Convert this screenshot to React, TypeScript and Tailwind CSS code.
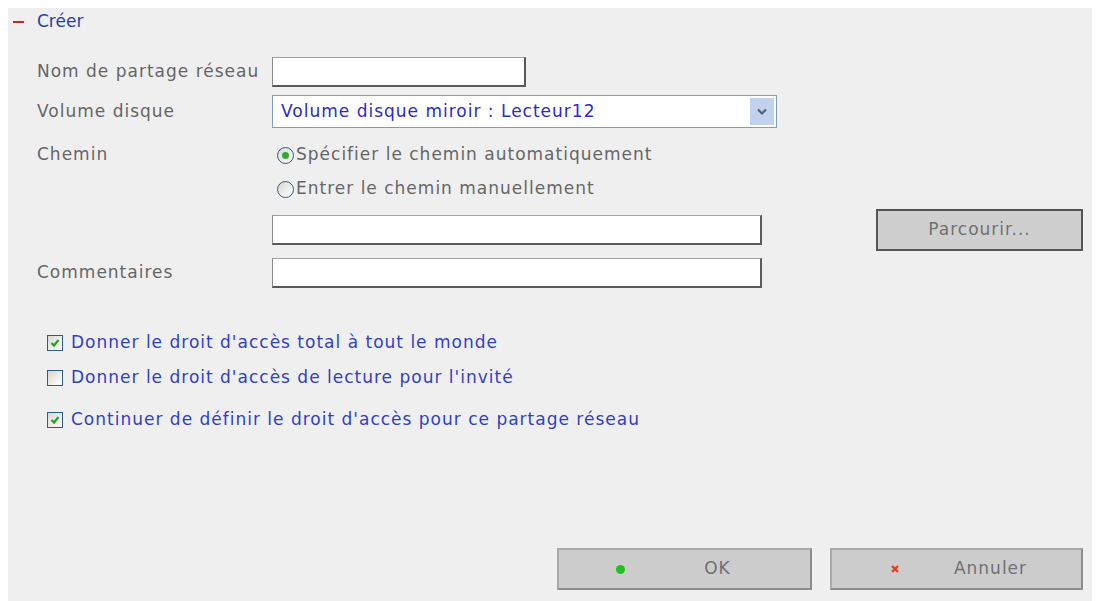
import React from "react";

const font = { fontFamily: '"DejaVu Sans", "Liberation Sans", sans-serif' };

const Radio = ({ checked }: { checked?: boolean }) => (
  <span className="relative inline-flex h-[17px] w-[17px] shrink-0 items-center justify-center rounded-full border border-[#2a5d8c] bg-gradient-to-br from-[#d8d8d2] to-white">
    {checked && <span className="h-[7px] w-[7px] rounded-full bg-[#2cab2c]" />}
  </span>
);

const Checkbox = ({ checked }: { checked?: boolean }) => (
  <span className="inline-flex h-[16px] w-[16px] shrink-0 items-center justify-center border border-[#2a5d8c] bg-gradient-to-br from-[#d8d8d2] to-white">
    {checked && (
      <svg viewBox="0 0 10 10" className="h-[10px] w-[10px]">
        <path d="M1.5 5 L4 7.5 L8.5 2" fill="none" stroke="#21a121" strokeWidth="2.2" />
      </svg>
    )}
  </span>
);

const TextBox = ({ className }: { className: string }) => (
  <div
    className={`h-[30px] bg-white border border-t-[#a0a0a0] border-l-[#8a8a8a] border-r-2 border-b-2 border-r-[#5a5a5a] border-b-[#5a5a5a] ${className}`}
  />
);

const Label = ({ children }: { children?: React.ReactNode }) => (
  <div className="w-[235px] shrink-0 text-[#666]">{children}</div>
);

const CheckRow = ({ checked, children, className }: { checked?: boolean; children: React.ReactNode; className: string }) => (
  <div className={`flex h-[28px] items-center pl-[39px] ${className}`}>
    <Checkbox checked={checked} />
    <span className="ml-[8px] text-[#2f3fcc]">{children}</span>
  </div>
);

export default function App() {
  return (
    <div className="h-[601px] w-full bg-white pl-[8px] pr-[6px] pt-[8px]" style={font}>
      <div className="flex h-full flex-col bg-[#efefef] text-[17px] tracking-[1px]">
        {/* Header */}
        <div className="flex h-[28px] items-center pl-[5px]">
          <div className="h-[2px] w-[11px] bg-[#e02020]" />
          <span className="ml-[13px] text-[#2640a8] tracking-normal">Créer</span>
        </div>

        {/* Form */}
        <div className="pl-[29px]">
          <div className="mt-[21px] flex h-[30px] items-center">
            <Label>Nom de partage réseau</Label>
            <TextBox className="w-[254px]" />
          </div>

          <div className="mt-[8px] flex h-[33px] items-center">
            <Label>Volume disque</Label>
            <div className="flex h-[33px] w-[505px] items-center border border-[#7f9db9] bg-white pl-[8px] pr-[2px]">
              <span className="flex-1 text-[#2b2bd0]">Volume disque miroir : Lecteur12</span>
              <span className="flex h-[27px] w-[24px] items-center justify-center bg-[#c1d2ee]">
                <svg viewBox="0 0 10 8" className="h-[8px] w-[10px]">
                  <path d="M1 1.5 L5 5.5 L9 1.5" fill="none" stroke="#4d6185" strokeWidth="2.2" />
                </svg>
              </span>
            </div>
          </div>

          <div className="mt-[13px] flex h-[28px] items-center">
            <Label>Chemin</Label>
            <div className="flex items-center pl-[5px]">
              <Radio checked />
              <span className="ml-[2px] text-[#666]">Spécifier le chemin automatiquement</span>
            </div>
          </div>

          <div className="mt-[6px] flex h-[28px] items-center">
            <Label />
            <div className="flex items-center pl-[5px]">
              <Radio />
              <span className="ml-[2px] text-[#666]">Entrer le chemin manuellement</span>
            </div>
          </div>

          <div className="mt-[12px] flex h-[30px] items-center">
            <Label />
            <TextBox className="w-[490px]" />
            <button className="ml-[114px] h-[42px] w-[207px] shrink-0 border-2 border-[#555] bg-[#cfcfcf] text-[#707070]">
              Parcourir...
            </button>
          </div>

          <div className="mt-[13px] flex h-[30px] items-center">
            <Label>Commentaires</Label>
            <TextBox className="w-[490px]" />
          </div>
        </div>

        {/* Options */}
        <CheckRow checked className="mt-[41px]">
          Donner le droit d'accès total à tout le monde
        </CheckRow>
        <CheckRow className="mt-[7px]">Donner le droit d'accès de lecture pour l'invité</CheckRow>
        <CheckRow checked className="mt-[14px]">
          Continuer de définir le droit d'accès pour ce partage réseau
        </CheckRow>

        {/* Actions */}
        <div className="mt-auto flex justify-end gap-[18px] pb-[11px] pr-[9px]">
          <button className="flex h-[42px] w-[255px] items-center border-2 border-[#a8a8a8] border-r-[#8c8c8c] border-b-[#8c8c8c] bg-[#cccccc] pl-[57px] text-[#707070]">
            <span className="h-[9px] w-[9px] rounded-full bg-[#1ec21e]" />
            <span className="flex-1 text-center">OK</span>
          </button>
          <button className="flex h-[42px] w-[253px] items-center border-2 border-[#a8a8a8] border-r-[#8c8c8c] border-b-[#8c8c8c] bg-[#cccccc] pl-[58px] text-[#707070]">
            <svg viewBox="0 0 10 10" className="h-[10px] w-[10px]">
              <path d="M2 2 L8 8 M8 2 L2 8" stroke="#e0401a" strokeWidth="2.4" />
            </svg>
            <span className="flex-1 text-center">Annuler</span>
          </button>
        </div>
      </div>
    </div>
  );
}
